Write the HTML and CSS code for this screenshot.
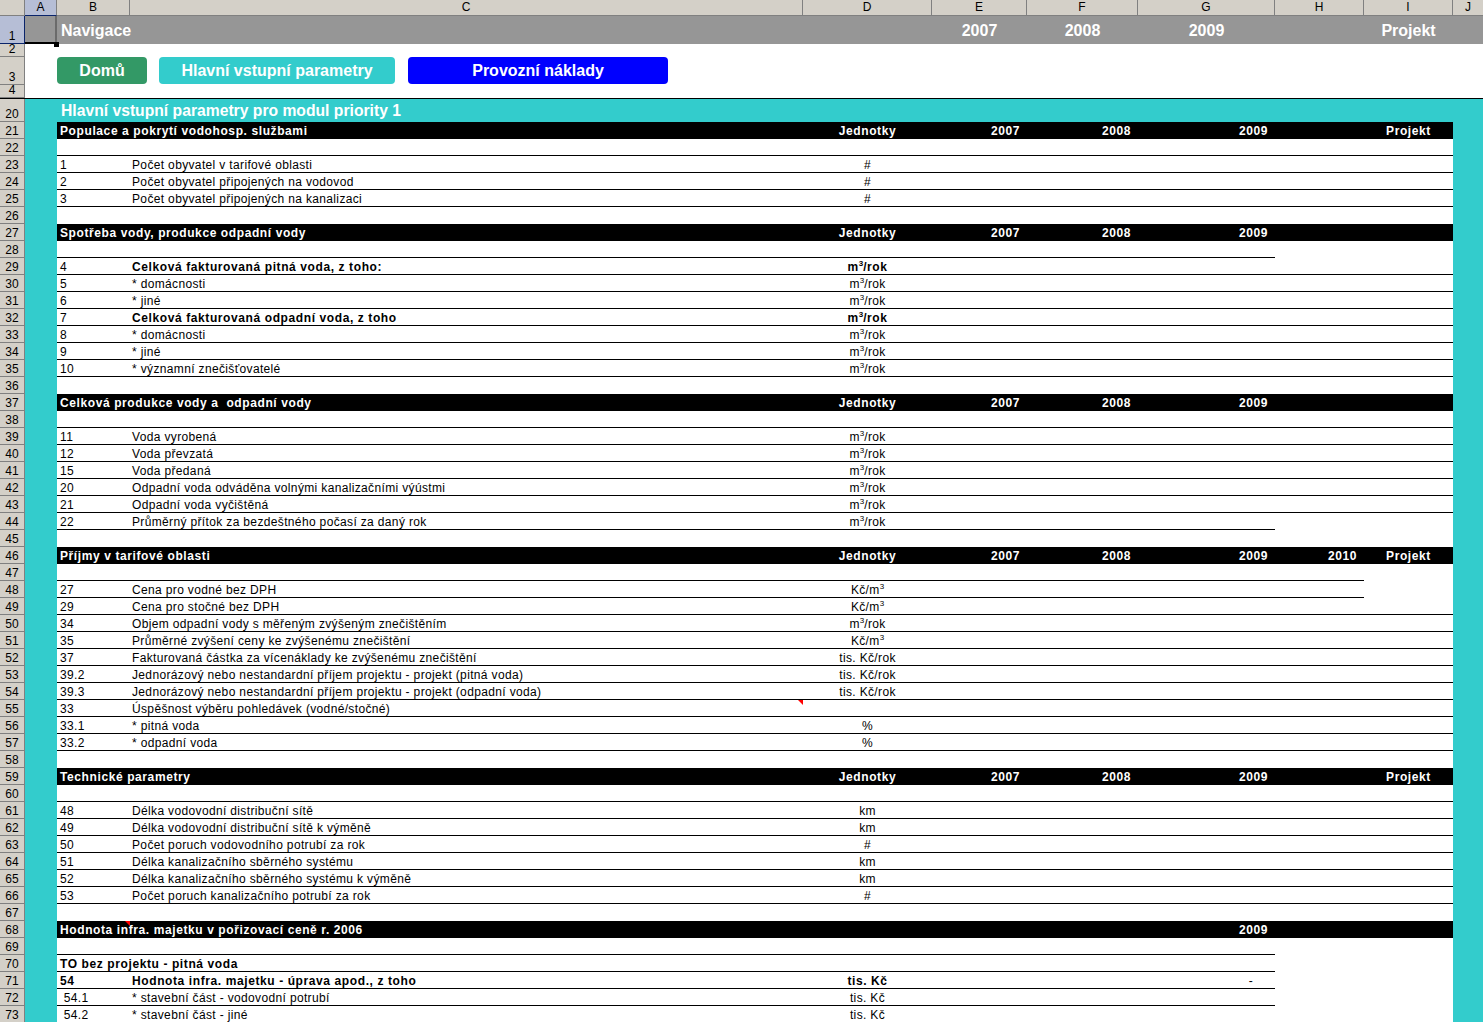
FILE: index.html
```html
<!DOCTYPE html>
<html lang="cs">
<head>
<meta charset="utf-8">
<title>Hlavní vstupní parametry</title>
<link rel="stylesheet" href="styles.css">
</head>
<body>
<div class="sheet">
  <div class="row colhdr">
    <span class="rh corner"></span>
    <span class="a sel">A</span><span class="b">B</span><span class="c">C</span><span class="d">D</span><span class="e">E</span><span class="f">F</span><span class="g">G</span><span class="h">H</span><span class="i">I</span><span class="j">J</span>
  </div>

  <div class="row r1">
    <span class="rh sel">1</span>
    <span class="a active"></span>
    <span class="b">Navigace</span>
    <span class="e">2007</span><span class="f">2008</span><span class="g">2009</span><span class="i">Projekt</span>
  </div>
  <div class="row r2"><span class="rh">2</span></div>
  <div class="row r3">
    <span class="rh">3</span>
    <div class="nav">
      <span class="btn btn-home">Domů</span>
      <span class="btn btn-main">Hlavní vstupní parametry</span>
      <span class="btn btn-cost">Provozní náklady</span>
    </div>
  </div>
  <div class="row r4"><span class="rh">4</span></div>
  <div class="row r20"><span class="rh">20</span><span class="b">Hlavní vstupní parametry pro modul priority 1</span></div>

  <div class="row dr band"><span class="rh">21</span><span class="b">Populace a pokrytí vodohosp. službami</span><span class="d">Jednotky</span><span class="e">2007</span><span class="f">2008</span><span class="g">2009</span><span class="i">Projekt</span></div>
  <div class="row dr ln"><span class="rh">22</span></div>
  <div class="row dr ln"><span class="rh">23</span><span class="b">1</span><span class="c">Počet obyvatel v tarifové oblasti</span><span class="d">#</span></div>
  <div class="row dr ln"><span class="rh">24</span><span class="b">2</span><span class="c">Počet obyvatel připojených na vodovod</span><span class="d">#</span></div>
  <div class="row dr ln"><span class="rh">25</span><span class="b">3</span><span class="c">Počet obyvatel připojených na kanalizaci</span><span class="d">#</span></div>
  <div class="row dr"><span class="rh">26</span></div>

  <div class="row dr band"><span class="rh">27</span><span class="b">Spotřeba vody, produkce odpadní vody</span><span class="d">Jednotky</span><span class="e">2007</span><span class="f">2008</span><span class="g">2009</span></div>
  <div class="row dr lnG"><span class="rh">28</span></div>
  <div class="row dr ln"><span class="rh">29</span><span class="b">4</span><span class="c bold">Celková fakturovaná pitná voda, z toho:</span><span class="d bold">m<sup>3</sup>/rok</span></div>
  <div class="row dr ln"><span class="rh">30</span><span class="b">5</span><span class="c">* domácnosti</span><span class="d">m<sup>3</sup>/rok</span></div>
  <div class="row dr ln"><span class="rh">31</span><span class="b">6</span><span class="c">* jiné</span><span class="d">m<sup>3</sup>/rok</span></div>
  <div class="row dr ln"><span class="rh">32</span><span class="b">7</span><span class="c bold">Celková fakturovaná odpadní voda, z toho</span><span class="d bold">m<sup>3</sup>/rok</span></div>
  <div class="row dr ln"><span class="rh">33</span><span class="b">8</span><span class="c">* domácnosti</span><span class="d">m<sup>3</sup>/rok</span></div>
  <div class="row dr ln"><span class="rh">34</span><span class="b">9</span><span class="c">* jiné</span><span class="d">m<sup>3</sup>/rok</span></div>
  <div class="row dr ln"><span class="rh">35</span><span class="b">10</span><span class="c">* významní znečišťovatelé</span><span class="d">m<sup>3</sup>/rok</span></div>
  <div class="row dr"><span class="rh">36</span></div>

  <div class="row dr band"><span class="rh">37</span><span class="b">Celková produkce vody a&nbsp; odpadní vody</span><span class="d">Jednotky</span><span class="e">2007</span><span class="f">2008</span><span class="g">2009</span></div>
  <div class="row dr ln"><span class="rh">38</span></div>
  <div class="row dr ln"><span class="rh">39</span><span class="b">11</span><span class="c">Voda vyrobená</span><span class="d">m<sup>3</sup>/rok</span></div>
  <div class="row dr ln"><span class="rh">40</span><span class="b">12</span><span class="c">Voda převzatá</span><span class="d">m<sup>3</sup>/rok</span></div>
  <div class="row dr ln"><span class="rh">41</span><span class="b">15</span><span class="c">Voda předaná</span><span class="d">m<sup>3</sup>/rok</span></div>
  <div class="row dr ln"><span class="rh">42</span><span class="b">20</span><span class="c">Odpadní voda odváděna volnými kanalizačními výústmi</span><span class="d">m<sup>3</sup>/rok</span></div>
  <div class="row dr ln"><span class="rh">43</span><span class="b">21</span><span class="c">Odpadní voda vyčištěná</span><span class="d">m<sup>3</sup>/rok</span></div>
  <div class="row dr lnG"><span class="rh">44</span><span class="b">22</span><span class="c">Průměrný přítok za bezdeštného počasí za daný rok</span><span class="d">m<sup>3</sup>/rok</span></div>
  <div class="row dr"><span class="rh">45</span></div>

  <div class="row dr band"><span class="rh">46</span><span class="b">Příjmy v tarifové oblasti</span><span class="d">Jednotky</span><span class="e">2007</span><span class="f">2008</span><span class="g">2009</span><span class="h">2010</span><span class="i">Projekt</span></div>
  <div class="row dr lnH"><span class="rh">47</span></div>
  <div class="row dr lnH"><span class="rh">48</span><span class="b">27</span><span class="c">Cena pro vodné bez DPH</span><span class="d">Kč/m<sup>3</sup></span></div>
  <div class="row dr ln"><span class="rh">49</span><span class="b">29</span><span class="c">Cena pro stočné bez DPH</span><span class="d">Kč/m<sup>3</sup></span></div>
  <div class="row dr ln"><span class="rh">50</span><span class="b">34</span><span class="c">Objem odpadní vody s měřeným zvýšeným znečištěním</span><span class="d">m<sup>3</sup>/rok</span></div>
  <div class="row dr ln"><span class="rh">51</span><span class="b">35</span><span class="c">Průměrné zvýšení ceny ke zvýšenému znečištění</span><span class="d">Kč/m<sup>3</sup></span></div>
  <div class="row dr ln"><span class="rh">52</span><span class="b">37</span><span class="c">Fakturovaná částka za vícenáklady ke zvýšenému znečištění</span><span class="d">tis. Kč/rok</span></div>
  <div class="row dr ln"><span class="rh">53</span><span class="b">39.2</span><span class="c">Jednorázový nebo nestandardní příjem projektu - projekt (pitná voda)</span><span class="d">tis. Kč/rok</span></div>
  <div class="row dr ln"><span class="rh">54</span><span class="b">39.3</span><span class="c">Jednorázový nebo nestandardní příjem projektu - projekt (odpadní voda)</span><span class="d">tis. Kč/rok</span></div>
  <div class="row dr ln"><span class="rh">55</span><span class="b">33</span><span class="c note">Úspěšnost výběru pohledávek (vodné/stočné)</span></div>
  <div class="row dr ln"><span class="rh">56</span><span class="b">33.1</span><span class="c">* pitná voda</span><span class="d">%</span></div>
  <div class="row dr ln"><span class="rh">57</span><span class="b">33.2</span><span class="c">* odpadní voda</span><span class="d">%</span></div>
  <div class="row dr"><span class="rh">58</span></div>

  <div class="row dr band"><span class="rh">59</span><span class="b">Technické parametry</span><span class="d">Jednotky</span><span class="e">2007</span><span class="f">2008</span><span class="g">2009</span><span class="i">Projekt</span></div>
  <div class="row dr ln"><span class="rh">60</span></div>
  <div class="row dr ln"><span class="rh">61</span><span class="b">48</span><span class="c">Délka vodovodní distribuční sítě</span><span class="d">km</span></div>
  <div class="row dr ln"><span class="rh">62</span><span class="b">49</span><span class="c">Délka vodovodní distribuční sítě k výměně</span><span class="d">km</span></div>
  <div class="row dr ln"><span class="rh">63</span><span class="b">50</span><span class="c">Počet poruch vodovodního potrubí za rok</span><span class="d">#</span></div>
  <div class="row dr ln"><span class="rh">64</span><span class="b">51</span><span class="c">Délka kanalizačního sběrného systému</span><span class="d">km</span></div>
  <div class="row dr ln"><span class="rh">65</span><span class="b">52</span><span class="c">Délka kanalizačního sběrného systému k výměně</span><span class="d">km</span></div>
  <div class="row dr ln"><span class="rh">66</span><span class="b">53</span><span class="c">Počet poruch kanalizačního potrubí za rok</span><span class="d">#</span></div>
  <div class="row dr"><span class="rh">67</span></div>

  <div class="row dr band"><span class="rh">68</span><span class="b note">Hodnota infra. majetku v pořizovací ceně r. 2006</span><span class="g">2009</span></div>
  <div class="row dr lnG"><span class="rh">69</span></div>
  <div class="row dr lnG"><span class="rh">70</span><span class="b bold">TO bez projektu - pitná voda</span></div>
  <div class="row dr lnG"><span class="rh">71</span><span class="b bold">54</span><span class="c bold">Hodnota infra. majetku - úprava apod., z toho</span><span class="d bold">tis. Kč</span><span class="g dash">-</span></div>
  <div class="row dr lnG"><span class="rh">72</span><span class="b">&nbsp;54.1</span><span class="c">* stavební část - vodovodní potrubí</span><span class="d">tis. Kč</span></div>
  <div class="row dr lnG"><span class="rh">73</span><span class="b">&nbsp;54.2</span><span class="c">* stavební část - jiné</span><span class="d">tis. Kč</span></div>
</div>
</body>
</html>
```
FILE: styles.css
```css
* { box-sizing: border-box; }
html, body { margin: 0; padding: 0; }
body {
  width: 1483px;
  height: 1022px;
  overflow: hidden;
  background: #fff;
  font-family: "Liberation Sans", Arial, sans-serif;
  font-size: 12px;
  color: #000;
}
.sheet { display: flex; flex-direction: column; }

.row {
  display: grid;
  grid-template-columns: 25px 32px 73px 673px 129px 95px 111px 137px 89px 89px 30px;
  grid-template-rows: minmax(0, 1fr);
  height: 17px;
  line-height: 17px;
  letter-spacing: 0.35px;
  white-space: nowrap;
  flex: none;
}
.row > * { grid-row: 1; min-width: 0; min-height: 0; }
.rh { grid-column: 1; }
.a { grid-column: 2; }
.b { grid-column: 3; padding-left: 3px; }
.c { grid-column: 4; padding-left: 2px; }
.d { grid-column: 5; text-align: center; }
.e { grid-column: 6; text-align: right; padding-right: 7px; }
.f { grid-column: 7; text-align: right; padding-right: 7px; }
.g { grid-column: 8; text-align: right; padding-right: 7px; }
.h { grid-column: 9; text-align: right; padding-right: 7px; }
.i { grid-column: 10; text-align: center; }
.j { grid-column: 11; }
.dr > .b, .dr > .c, .dr > .d, .dr > .e, .dr > .f,
.dr > .g, .dr > .h, .dr > .i { padding-top: 2px; line-height: 15px; }
.band > .b, .band > .c, .band > .d, .band > .e, .band > .f,
.band > .g, .band > .h, .band > .i { padding-top: 1px; line-height: 16px; }
.bold { font-weight: bold; letter-spacing: 0.6px; }
sup { font-size: 8px; line-height: 0; vertical-align: 5px; letter-spacing: 0; }

/* row headers */
.rh {
  background: #d4d0c8;
  border-right: 1px solid #808080;
  border-bottom: 1px solid #808080;
  display: flex;
  align-items: flex-end;
  justify-content: center;
  line-height: 14px;
  letter-spacing: 0;
  font-size: 12px;
  font-weight: normal;
  color: #000;
}
.dr .rh { line-height: 13px; }
.rh.sel {
  background: #b6bed6;
  border-right: 1px solid #0a246a;
  border-bottom: 1px solid #0a246a;
}

/* column header */
.colhdr { height: 16px; line-height: 15px; letter-spacing: 0; }
.colhdr > span {
  background: #d4d0c8;
  border-right: 1px solid #808080;
  border-bottom: 1px solid #808080;
  text-align: center;
  padding: 0;
}
.colhdr > span.sel { background: #b6bed6; border-bottom-color: #0a246a; }
.colhdr > .j { border-right: 0; }

/* row 1 navigation band */
.r1 {
  height: 28px;
  line-height: 30px;
  background: #969696;
  color: #fff;
  font-weight: bold;
  font-size: 16px;
  letter-spacing: 0;
}
.r1 .b { padding-left: 4px; }
.r1 .e, .r1 .f, .r1 .g { text-align: center; padding-right: 0; }
.active {
  position: relative;
  border-right: 2px solid #6a6a6a;
}
.active::before {
  content: "";
  position: absolute;
  left: 0; right: 0; bottom: 0;
  height: 2px;
  background: #000;
}
.active::after {
  content: "";
  position: absolute;
  right: -4px; bottom: -3px;
  width: 5px; height: 5px;
  background: #000;
  z-index: 2;
}

.r2, .r4 { height: 13px; }
.r3 { height: 28px; }
.nav {
  grid-column: 3 / 12;
  display: flex;
  gap: 12px;
  align-items: flex-start;
}
.btn {
  display: flex;
  align-items: center;
  justify-content: center;
  height: 27px;
  border-radius: 4px;
  color: #fff;
  font-weight: bold;
  font-size: 16px;
  letter-spacing: 0;
}
.btn-home { width: 90px; background: #339966; }
.btn-main { width: 236px; background: #33cccc; }
.btn-cost { width: 260px; background: #0000ff; margin-left: 1px; }

/* row 20 title */
.r20 {
  height: 24px;
  border-top: 1px solid #000;
  background: #33cccc;
  color: #fff;
  font-weight: bold;
  font-size: 15.7px;
  line-height: 23px;
  letter-spacing: 0;
}
.r20 .rh { line-height: 14px; }
.r20 .b { padding-left: 4px; }

/* data rows */
.dr {
  background: linear-gradient(to right, #33cccc 0 57px, #fff 57px 1453px, #33cccc 1453px);
}
.band { color: #fff; font-weight: bold; letter-spacing: 0.6px; }
.band::before {
  content: "";
  grid-column: 3 / 11;
  grid-row: 1;
  background: #000;
}
.ln::after, .lnG::after, .lnH::after {
  content: "";
  grid-row: 1;
  align-self: end;
  height: 1px;
  background: #000;
}
.ln::after { grid-column: 3 / 11; }
.lnG::after { grid-column: 3 / 9; }
.lnH::after { grid-column: 3 / 10; }

.dash { padding-right: 22px; }

/* comment indicator */
.note { position: relative; }
.note::after {
  content: "";
  position: absolute;
  top: 0; right: 0;
  width: 0; height: 0;
  border-top: 5px solid #ff0000;
  border-left: 5px solid transparent;
}
```
